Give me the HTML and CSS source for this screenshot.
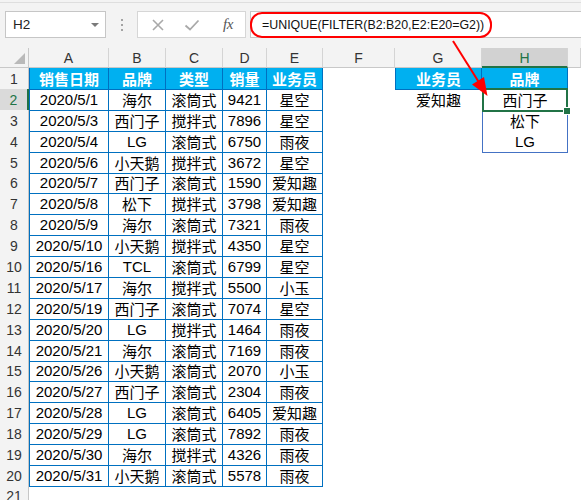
FILE: index.html
```html
<!DOCTYPE html>
<html lang="zh-CN">
<head>
<meta charset="utf-8">
<title>UNIQUE FILTER</title>
<link rel="stylesheet" href="styles.css">
</head>
<body>
<div class="top">
  <div class="toolbar">
    <div class="namebox"><span>H2</span><span class="caret"></span></div>
    <div class="dots"><i></i><i></i><i></i></div>
    <div class="fbtns">
      <svg class="ic-x" width="12" height="12" viewBox="0 0 12 12"><path d="M1 1L11 11M11 1L1 11" stroke="#a9a9a9" stroke-width="1.6" fill="none"/></svg>
      <svg class="ic-ok" width="16" height="12" viewBox="0 0 16 12"><path d="M1.5 6.5L6 10.5L14.5 1.5" stroke="#a9a9a9" stroke-width="1.8" fill="none"/></svg>
      <span class="fx">fx</span>
    </div>
    <div class="fbox">=UNIQUE(FILTER(B2:B20,E2:E20=G2))</div>
  </div>
</div>
<div class="sheet">
  <div class="r hdr"><div class="corner"><span class="tri"></span></div><div>A</div><div>B</div><div>C</div><div>D</div><div>E</div><div>F</div><div>G</div><div class="selh">H</div><div></div></div>
  <div class="r"><div class="rh">1</div><div class="t a h">销售日期</div><div class="t h">品牌</div><div class="t h">类型</div><div class="t h">销量</div><div class="t h">业务员</div><div></div><div class="h g1">业务员</div><div class="h h1">品牌</div></div>
  <div class="r"><div class="rh selr">2</div><div class="t a">2020/5/1</div><div class="t">海尔</div><div class="t">滚筒式</div><div class="t">9421</div><div class="t">星空</div><div></div><div>爱知趣</div><div class="sp sel">西门子</div></div>
  <div class="r"><div class="rh">3</div><div class="t a">2020/5/3</div><div class="t">西门子</div><div class="t">搅拌式</div><div class="t">7896</div><div class="t">星空</div><div></div><div></div><div class="sp">松下</div></div>
  <div class="r"><div class="rh">4</div><div class="t a">2020/5/4</div><div class="t">LG</div><div class="t">滚筒式</div><div class="t">6750</div><div class="t">雨夜</div><div></div><div></div><div class="sp last">LG</div></div>
  <div class="r"><div class="rh">5</div><div class="t a">2020/5/6</div><div class="t">小天鹅</div><div class="t">搅拌式</div><div class="t">3672</div><div class="t">星空</div></div>
  <div class="r"><div class="rh">6</div><div class="t a">2020/5/7</div><div class="t">西门子</div><div class="t">滚筒式</div><div class="t">1590</div><div class="t">爱知趣</div></div>
  <div class="r"><div class="rh">7</div><div class="t a">2020/5/8</div><div class="t">松下</div><div class="t">搅拌式</div><div class="t">3798</div><div class="t">爱知趣</div></div>
  <div class="r"><div class="rh">8</div><div class="t a">2020/5/9</div><div class="t">海尔</div><div class="t">滚筒式</div><div class="t">7321</div><div class="t">雨夜</div></div>
  <div class="r"><div class="rh">9</div><div class="t a">2020/5/10</div><div class="t">小天鹅</div><div class="t">搅拌式</div><div class="t">4350</div><div class="t">星空</div></div>
  <div class="r"><div class="rh">10</div><div class="t a">2020/5/16</div><div class="t">TCL</div><div class="t">滚筒式</div><div class="t">6799</div><div class="t">星空</div></div>
  <div class="r"><div class="rh">11</div><div class="t a">2020/5/17</div><div class="t">海尔</div><div class="t">搅拌式</div><div class="t">5500</div><div class="t">小玉</div></div>
  <div class="r"><div class="rh">12</div><div class="t a">2020/5/19</div><div class="t">西门子</div><div class="t">滚筒式</div><div class="t">7074</div><div class="t">星空</div></div>
  <div class="r"><div class="rh">13</div><div class="t a">2020/5/20</div><div class="t">LG</div><div class="t">搅拌式</div><div class="t">1464</div><div class="t">雨夜</div></div>
  <div class="r"><div class="rh">14</div><div class="t a">2020/5/21</div><div class="t">海尔</div><div class="t">滚筒式</div><div class="t">7169</div><div class="t">雨夜</div></div>
  <div class="r"><div class="rh">15</div><div class="t a">2020/5/26</div><div class="t">小天鹅</div><div class="t">滚筒式</div><div class="t">2070</div><div class="t">小玉</div></div>
  <div class="r"><div class="rh">16</div><div class="t a">2020/5/27</div><div class="t">西门子</div><div class="t">滚筒式</div><div class="t">2304</div><div class="t">雨夜</div></div>
  <div class="r"><div class="rh">17</div><div class="t a">2020/5/28</div><div class="t">LG</div><div class="t">滚筒式</div><div class="t">6405</div><div class="t">爱知趣</div></div>
  <div class="r"><div class="rh">18</div><div class="t a">2020/5/29</div><div class="t">LG</div><div class="t">滚筒式</div><div class="t">7892</div><div class="t">雨夜</div></div>
  <div class="r"><div class="rh">19</div><div class="t a">2020/5/30</div><div class="t">海尔</div><div class="t">搅拌式</div><div class="t">4326</div><div class="t">雨夜</div></div>
  <div class="r"><div class="rh">20</div><div class="t a">2020/5/31</div><div class="t">小天鹅</div><div class="t">滚筒式</div><div class="t">5578</div><div class="t">雨夜</div></div>
  <div class="r"><div class="rh">21</div></div>
</div>
<div class="callout"></div>
<svg class="arrow" width="581" height="500" viewBox="0 0 581 500">
  <line x1="453" y1="41" x2="480" y2="84" stroke="#ff0000" stroke-width="2"/>
  <polygon points="487.5,96 472,84.5 484,77" fill="#ff0000"/>
</svg>
</body>
</html>
```
FILE: styles.css
```css
* { box-sizing: border-box; }
body {
  margin: 0;
  width: 581px;
  height: 500px;
  overflow: hidden;
  background: #fff;
  position: relative;
  font-family: "Liberation Sans", "Noto Sans CJK SC", sans-serif;
  color: #000;
}
.top {
  background: #f3f3f3;
  padding-top: 2px;
}
.toolbar {
  height: 46px;
  border-top: 1px solid #dedede;
  padding-top: 8px;
  display: flex;
  align-items: flex-start;
}
.namebox {
  margin-left: 5px;
  width: 101px;
  height: 27px;
  background: #fff;
  border: 1px solid #c6c6c6;
  display: flex;
  align-items: center;
  padding: 0 6px 0 7px;
  font-size: 13.5px;
  color: #222;
}
.caret {
  margin-left: auto;
  width: 0;
  height: 0;
  border-left: 4.5px solid transparent;
  border-right: 4.5px solid transparent;
  border-top: 4.5px solid #7a7a7a;
}
.dots {
  width: 31px;
  height: 27px;
  display: flex;
  flex-direction: column;
  align-items: center;
  justify-content: center;
  gap: 3px;
}
.dots i {
  display: block;
  width: 2px;
  height: 2px;
  background: #a3a3a3;
}
.fbtns {
  width: 109px;
  height: 27px;
  background: #fff;
  border: 1px solid #d6d6d6;
  display: flex;
  align-items: center;
  padding-left: 14px;
}
.ic-x { margin-right: 20px; }
.ic-ok { margin-right: 23px; }
.fx {
  font-family: "Liberation Serif", serif;
  font-style: italic;
  font-size: 15px;
  color: #555;
  letter-spacing: -0.5px;
}
.fbox {
  margin-left: 4px;
  flex: 1;
  height: 27px;
  background: #fff;
  border: 1px solid #c6c6c6;
  border-right: none;
  display: flex;
  align-items: center;
  padding-left: 11px;
  font-size: 12.4px;
  color: #111;
}
.callout {
  position: absolute;
  left: 250px;
  top: 12px;
  width: 242px;
  height: 26px;
  border: 2px solid #ff0000;
  border-radius: 12px;
}
.arrow {
  position: absolute;
  left: 0;
  top: 0;
  pointer-events: none;
}
.r {
  display: grid;
  grid-template-columns: 29px 80px 57px 57px 44px 56px 72px 87px 86px 1fr;
  height: 20.9px;
}
.r > div {
  display: flex;
  align-items: center;
  justify-content: center;
  white-space: nowrap;
  font-size: 15px;
}
.hdr { height: 20px; }
.hdr > div {
  background: #f3f3f3;
  border-right: 1px solid #d4d4d4;
  border-bottom: 1px solid #c8c8c8;
  font-size: 14px;
  color: #333;
  padding-top: 1px;
}
.hdr > .corner {
  justify-content: flex-end;
  align-items: flex-end;
  padding: 0 3px 3px 0;
  border-right: 1px solid #c8c8c8;
}
.tri {
  width: 0;
  height: 0;
  border-left: 11px solid transparent;
  border-bottom: 11px solid #b9b9b9;
}
.hdr > .selh {
  background: #d2d2d2;
  color: #217346;
  border-bottom: 2px solid #217346;
}
.r > .rh {
  background: #f3f3f3;
  border-right: 1px solid #c6c6c6;
  border-bottom: 1px solid #dcdcdc;
  font-size: 14px;
  color: #333;
  padding-top: 1px;
}
.r > .selr {
  background: #dadada;
  color: #217346;
  border-right: 2px solid #217346;
}
.t {
  border-right: 1px solid #0070c0;
  border-bottom: 1px solid #0070c0;
}
.t.a { border-left: 1px solid #0070c0; }
.h {
  background: #00b0f0;
  color: #fff;
  font-weight: bold;
}
.g1 {
  border-left: 1px solid #0070c0;
  border-right: 1px solid #0070c0;
  border-bottom: 1px solid #0070c0;
}
.h1 {
  border-right: 1px solid #0070c0;
  border-bottom: 1px solid #0070c0;
}
.sp {
  border-left: 1px solid #4472c4;
  border-right: 1px solid #4472c4;
}
.sp.last { border-bottom: 1px solid #4472c4; }
.sel { position: relative; }
.sel::after {
  content: "";
  position: absolute;
  left: -1px;
  right: -1px;
  top: -1px;
  bottom: -1px;
  border: 2px solid #217346;
}
.sel::before {
  content: "";
  position: absolute;
  right: -4px;
  bottom: -4px;
  width: 6px;
  height: 6px;
  background: #217346;
  border: 1px solid #fff;
  z-index: 2;
}
```
